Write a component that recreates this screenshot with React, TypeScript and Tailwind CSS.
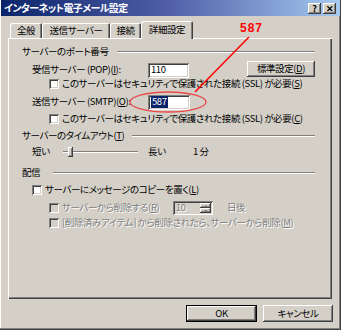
import type { ReactNode } from "react";

const raised =
  "shadow-[inset_-1px_-1px_0_#404040,inset_1px_1px_0_#ffffff,inset_-2px_-2px_0_#808080]";
const sunken =
  "shadow-[inset_1px_1px_0_#808080,inset_-1px_-1px_0_#ffffff,inset_2px_2px_0_#404040,inset_-2px_-2px_0_#d4d0c8]";
const dimText = "text-[#808080] [text-shadow:1px_1px_0_#ffffff]";

function CapBtn({ children }: { children: ReactNode }) {
  return (
    <span
      className={`flex h-[11px] w-[13px] items-center justify-center bg-[#d4d0c8] text-[9px] font-bold leading-none tracking-normal text-black ${raised}`}
    >
      {children}
    </span>
  );
}

function Tab({ children, width, active }: { children: ReactNode; width: string; active?: boolean }) {
  return (
    <div
      className={`flex items-center justify-center rounded-t-[2px] bg-[#d4d0c8] ${width} ${
        active
          ? "relative z-10 -mb-[1px] h-[18px] shadow-[inset_1px_1px_0_#ffffff,inset_-1px_0_0_#404040,inset_-2px_0_0_#808080]"
          : "h-[15px] shadow-[inset_1px_1px_0_#ffffff,inset_-1px_0_0_#404040,inset_-2px_0_0_#808080]"
      }`}
    >
      {children}
    </div>
  );
}

function Check({ disabled }: { disabled?: boolean }) {
  return (
    <span
      className={`inline-block h-[10px] w-[10px] shrink-0 ${disabled ? "bg-[#d4d0c8]" : "bg-white"} ${sunken}`}
    />
  );
}

function GroupLabel({ label, width }: { label: ReactNode; width: string }) {
  return (
    <div className="flex h-[14px] items-center">
      <span className={`shrink-0 ${width}`}>{label}</span>
      <div className="h-0 flex-1 border-t border-b border-t-[#808080] border-b-white" />
    </div>
  );
}

export default function App() {
  return (
    <div className="relative h-[330px] w-[341px] overflow-hidden whitespace-nowrap bg-[#d4d0c8] font-['Noto_Sans_CJK_JP',sans-serif] text-[9.5px] leading-none tracking-[-0.4px] text-black [font-feature-settings:'palt'] shadow-[inset_-1px_-1px_0_#404040,inset_-2px_-2px_0_#808080,inset_1px_0_0_#ffffff]">
      {/* title bar */}
      <div className="mx-[1px] flex h-[16px] items-center justify-between bg-gradient-to-r from-[#0a246a] via-[#5260a8] to-[#a6caf0]">
        <span className="pl-[3px] text-[10px] font-bold tracking-[-0.6px] text-white">
          インターネット電子メール設定
        </span>
        <div className="flex items-center gap-[2px] pr-[4px]">
          <CapBtn>?</CapBtn>
          <CapBtn>✕</CapBtn>
        </div>
      </div>

      {/* tabs */}
      <div className="ml-[10px] mt-[5px] flex h-[17px] items-end">
        <Tab width="w-[32px]">全般</Tab>
        <Tab width="w-[68px]">送信サーバー</Tab>
        <Tab width="w-[31px]">接続</Tab>
        <Tab width="w-[52px]" active>
          詳細設定
        </Tab>
      </div>

      {/* panel */}
      <div className="ml-[8px] flex h-[261px] w-[324px] flex-col pl-[14px] pr-[17px] pt-[7px] shadow-[inset_1px_1px_0_#ffffff,inset_-1px_-1px_0_#404040,inset_-2px_-2px_0_#808080]">
        <GroupLabel label="サーバーのポート番号" width="w-[95px]" />

        <div className="mt-[3px] flex h-[16px] items-center pl-[10px]">
          <span className="w-[116px] shrink-0">
            受信サーバー&nbsp;(POP)(<u>I</u>):
          </span>
          <div className={`flex h-[15px] w-[42px] items-center bg-white pl-[3px] ${sunken}`}>110</div>
          <button
            className={`-mt-[3px] ml-[58px] flex h-[16px] w-[70px] items-center justify-center bg-[#d4d0c8] ${raised}`}
          >
            標準設定(<u>D</u>)
          </button>
        </div>

        <div className="flex h-[12px] items-center gap-[3px] pl-[27px]">
          <Check />
          <span>
            このサーバーはセキュリティで保護された接続 (SSL) が必要(<u>S</u>)
          </span>
        </div>

        <div className="mt-[4px] flex h-[16px] items-center pl-[10px]">
          <span className="w-[116px] shrink-0">
            送信サーバー&nbsp;(SMTP)(<u>O</u>):
          </span>
          <div className={`flex h-[15px] w-[42px] items-center bg-white pl-[3px] ${sunken}`}>
            <span className="bg-[#0a246a] px-[1px] py-[1px] text-white">587</span>
          </div>
        </div>

        <div className="mt-[3px] flex h-[12px] items-center gap-[3px] pl-[27px]">
          <Check />
          <span>
            このサーバーはセキュリティで保護された接続 (SSL) が必要(<u>C</u>)
          </span>
        </div>

        <div className="mt-[4px]">
          <GroupLabel
            label={
              <>
                サーバーのタイムアウト(<u>T</u>)
              </>
            }
            width="w-[110px]"
          />
        </div>

        <div className="mt-[2px] flex h-[14px] items-center pl-[10px]">
          <span className="w-[31px] shrink-0">短い</span>
          <div className="relative flex h-[14px] w-[75px] items-center">
            <div className="h-[2px] w-full border-t border-b border-t-[#808080] border-b-white" />
            <div className={`absolute left-[5px] top-[2px] h-[10px] w-[5px] bg-[#d4d0c8] ${raised}`} />
          </div>
          <span className="ml-[10px] w-[45px] shrink-0">長い</span>
          <span>1 分</span>
        </div>

        <div className="mt-[7px]">
          <GroupLabel label="配信" width="w-[31px]" />
        </div>

        <div className="mt-[4px] flex h-[12px] items-center gap-[3px] pl-[10px]">
          <Check />
          <span>
            サーバーにメッセージのコピーを置く(<u>L</u>)
          </span>
        </div>

        <div className="mt-[5px] flex h-[14px] items-center pl-[27px]">
          <Check disabled />
          <span className={`ml-[3px] w-[111px] shrink-0 ${dimText}`}>
            サーバーから削除する(<u>R</u>)
          </span>
          <div className={`flex h-[14px] w-[40px] items-center justify-between bg-[#d4d0c8] pl-[3px] pr-[2px] ${sunken}`}>
            <span className={dimText}>10</span>
            <div className="flex flex-col">
              <span className={`flex h-[5px] w-[11px] items-center justify-center bg-[#d4d0c8] ${raised}`}>
                <span className="h-0 w-0 border-x-[2px] border-b-[2px] border-x-transparent border-b-[#808080]" />
              </span>
              <span className={`flex h-[5px] w-[11px] items-center justify-center bg-[#d4d0c8] ${raised}`}>
                <span className="h-0 w-0 border-x-[2px] border-t-[2px] border-x-transparent border-t-[#808080]" />
              </span>
            </div>
          </div>
          <span className={`ml-[14px] ${dimText}`}>日後</span>
        </div>

        <div className="mt-[2px] flex h-[12px] items-center gap-[3px] pl-[27px]">
          <Check disabled />
          <span className={dimText}>
            [削除済みアイテム] から削除されたら、サーバーから削除(<u>M</u>)
          </span>
        </div>
      </div>

      {/* dialog buttons */}
      <div className="mt-[6px] flex justify-end gap-[6px] pr-[8px]">
        <button
          className={`flex h-[17px] w-[71px] items-center justify-center bg-[#d4d0c8] shadow-[inset_0_0_0_1px_#000000,inset_-2px_-2px_0_#404040,inset_2px_2px_0_#ffffff,inset_-3px_-3px_0_#808080]`}
        >
          OK
        </button>
        <button className={`flex h-[17px] w-[70px] items-center justify-center bg-[#d4d0c8] ${raised}`}>
          キャンセル
        </button>
      </div>

      {/* red annotation */}
      <svg className="pointer-events-none absolute left-0 top-0" width="341" height="330">
        <ellipse cx="168" cy="102" rx="38" ry="10" fill="none" stroke="#e84848" strokeWidth="1.3" />
        <line x1="195" y1="92" x2="249" y2="37" stroke="#ff0000" strokeWidth="1.5" />
      </svg>
      <span className="absolute left-[240px] top-[22px] font-['Liberation_Sans',sans-serif] text-[12px] font-bold tracking-[1px] text-[#ff0000]">
        587
      </span>
    </div>
  );
}
